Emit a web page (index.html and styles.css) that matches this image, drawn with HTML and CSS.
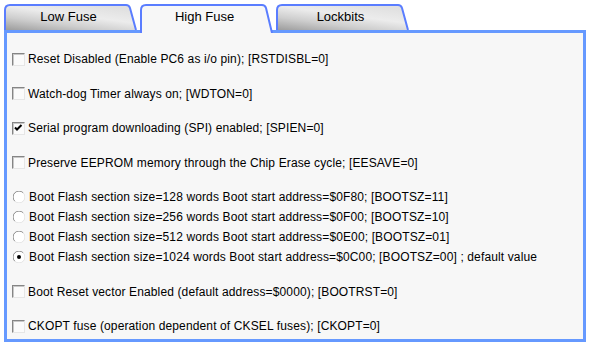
FILE: index.html
```html
<!DOCTYPE html>
<html>
<head>
    <title>High Fuse</title>
    <link rel="stylesheet" href="styles.css">
</head>
<body>
    <div class="fuse-window">
        <div class="tabs">
            <div class="tab">
                <svg class="tab-bg" width="133" height="26" viewBox="0 0 133 26">
                    <defs>
                        <linearGradient id="tabGrad" x1="0" y1="1" x2="0.7" y2="0">
                            <stop offset="0" stop-color="#9c9c9c"/>
                            <stop offset="0.35" stop-color="#cecece"/>
                            <stop offset="0.65" stop-color="#ececec"/>
                            <stop offset="1" stop-color="#e0e0e0"/>
                        </linearGradient>
                    </defs>
                    <path d="M1,26 V6 Q1,1 6,1 H122 Q125,1 126,4 L132,26 Z" fill="url(#tabGrad)"/>
                    <path d="M1,26 V6 Q1,1 6,1 H122 Q125,1 126,4 L132,26" fill="none" stroke="#5a7dff" stroke-width="2"/>
                </svg>
                <span class="tab-label">Low Fuse</span>
            </div>
            <div class="tab tab-active">
                <svg class="tab-bg" width="133" height="29" viewBox="0 0 133 29">
                    <path d="M1,29 V6 Q1,1 6,1 H122 Q125,1 126,4 L132,29 Z" fill="#f7f7f7"/>
                    <path d="M1,29 V6 Q1,1 6,1 H122 Q125,1 126,4 L132,29" fill="none" stroke="#5a7dff" stroke-width="2"/>
                </svg>
                <span class="tab-label">High Fuse</span>
            </div>
            <div class="tab">
                <svg class="tab-bg" width="133" height="26" viewBox="0 0 133 26">
                    <path d="M1,26 V6 Q1,1 6,1 H122 Q125,1 126,4 L132,26 Z" fill="url(#tabGrad)"/>
                    <path d="M1,26 V6 Q1,1 6,1 H122 Q125,1 126,4 L132,26" fill="none" stroke="#5a7dff" stroke-width="2"/>
                </svg>
                <span class="tab-label">Lockbits</span>
            </div>
        </div>

        <div class="panel">
            <div class="opt"><span class="box"></span>Reset Disabled (Enable PC6 as i/o pin); [RSTDISBL=0]</div>
            <div class="opt"><span class="box"></span>Watch-dog Timer always on; [WDTON=0]</div>
            <div class="opt"><span class="box"><svg width="11" height="11" viewBox="0 0 11 11"><polyline points="2,4.5 4,6.5 8.5,2" fill="none" stroke="#000" stroke-width="2"/></svg></span>Serial program downloading (SPI) enabled; [SPIEN=0]</div>
            <div class="opt"><span class="box"></span>Preserve EEPROM memory through the Chip Erase cycle; [EESAVE=0]</div>

            <div class="radio-group">
                <div class="opt"><svg class="radio" width="12" height="12" viewBox="0 0 12 12"><circle cx="6" cy="6" r="5.5" fill="#fff"/><path d="M1.8,10.2 A5.5,5.5 0 0 1 10.2,1.8" fill="none" stroke="#8a8a8a"/><path d="M10.2,1.8 A5.5,5.5 0 0 1 1.8,10.2" fill="none" stroke="#e4e4e4"/></svg>Boot Flash section size=128 words Boot start address=$0F80; [BOOTSZ=11]</div>
                <div class="opt"><svg class="radio" width="12" height="12" viewBox="0 0 12 12"><circle cx="6" cy="6" r="5.5" fill="#fff"/><path d="M1.8,10.2 A5.5,5.5 0 0 1 10.2,1.8" fill="none" stroke="#8a8a8a"/><path d="M10.2,1.8 A5.5,5.5 0 0 1 1.8,10.2" fill="none" stroke="#e4e4e4"/></svg>Boot Flash section size=256 words Boot start address=$0F00; [BOOTSZ=10]</div>
                <div class="opt"><svg class="radio" width="12" height="12" viewBox="0 0 12 12"><circle cx="6" cy="6" r="5.5" fill="#fff"/><path d="M1.8,10.2 A5.5,5.5 0 0 1 10.2,1.8" fill="none" stroke="#8a8a8a"/><path d="M10.2,1.8 A5.5,5.5 0 0 1 1.8,10.2" fill="none" stroke="#e4e4e4"/></svg>Boot Flash section size=512 words Boot start address=$0E00; [BOOTSZ=01]</div>
                <div class="opt"><svg class="radio" width="12" height="12" viewBox="0 0 12 12"><circle cx="6" cy="6" r="5.5" fill="#fff"/><path d="M1.8,10.2 A5.5,5.5 0 0 1 10.2,1.8" fill="none" stroke="#8a8a8a"/><path d="M10.2,1.8 A5.5,5.5 0 0 1 1.8,10.2" fill="none" stroke="#e4e4e4"/><circle cx="6" cy="6" r="2" fill="#000"/></svg>Boot Flash section size=1024 words Boot start address=$0C00; [BOOTSZ=00] ; default value</div>
            </div>

            <div class="opt"><span class="box"></span>Boot Reset vector Enabled (default address=$0000); [BOOTRST=0]</div>
            <div class="opt"><span class="box"></span>CKOPT fuse (operation dependent of CKSEL fuses); [CKOPT=0]</div>
        </div>
    </div>
</body>
</html>
```

FILE: styles.css
```css
body { margin: 0; background: #ffffff; font-family: "Liberation Sans", Arial, sans-serif; font-size: 12px; color: #000; }
.fuse-window { width: 582px; padding: 4px 3px 0 4px; }
.tabs { display: flex; gap: 3px; height: 29px; margin-bottom: -3px; position: relative; z-index: 1; align-items: flex-start; }
.tab { position: relative; width: 133px; height: 26px; display: flex; align-items: center; justify-content: center; }
.tab-active { height: 29px; align-items: flex-start; }
.tab-bg { position: absolute; left: 0; top: 0; }
.tab-label { position: relative; font-size: 13px; line-height: 26px; padding-right: 4px; }
.panel { height: 312px; box-sizing: border-box; border: 3px solid #6699ff; background: #f7f7f7; padding: 16px 0 0 5px; display: flex; flex-direction: column; gap: 14.5px; }
.radio-group { display: flex; flex-direction: column; }
.opt { height: 20px; display: flex; align-items: center; white-space: nowrap; letter-spacing: 0.13px; }
.box { width: 13px; height: 13px; box-sizing: border-box; border: 1px solid; border-color: #858585 #e6e6e6 #e6e6e6 #858585; box-shadow: inset 1px 1px 0 #c8c8c8; background: #fbfbfb; margin-right: 3px; display: flex; }
.radio { margin: 0 4px 0 1px; flex: none; }
```
